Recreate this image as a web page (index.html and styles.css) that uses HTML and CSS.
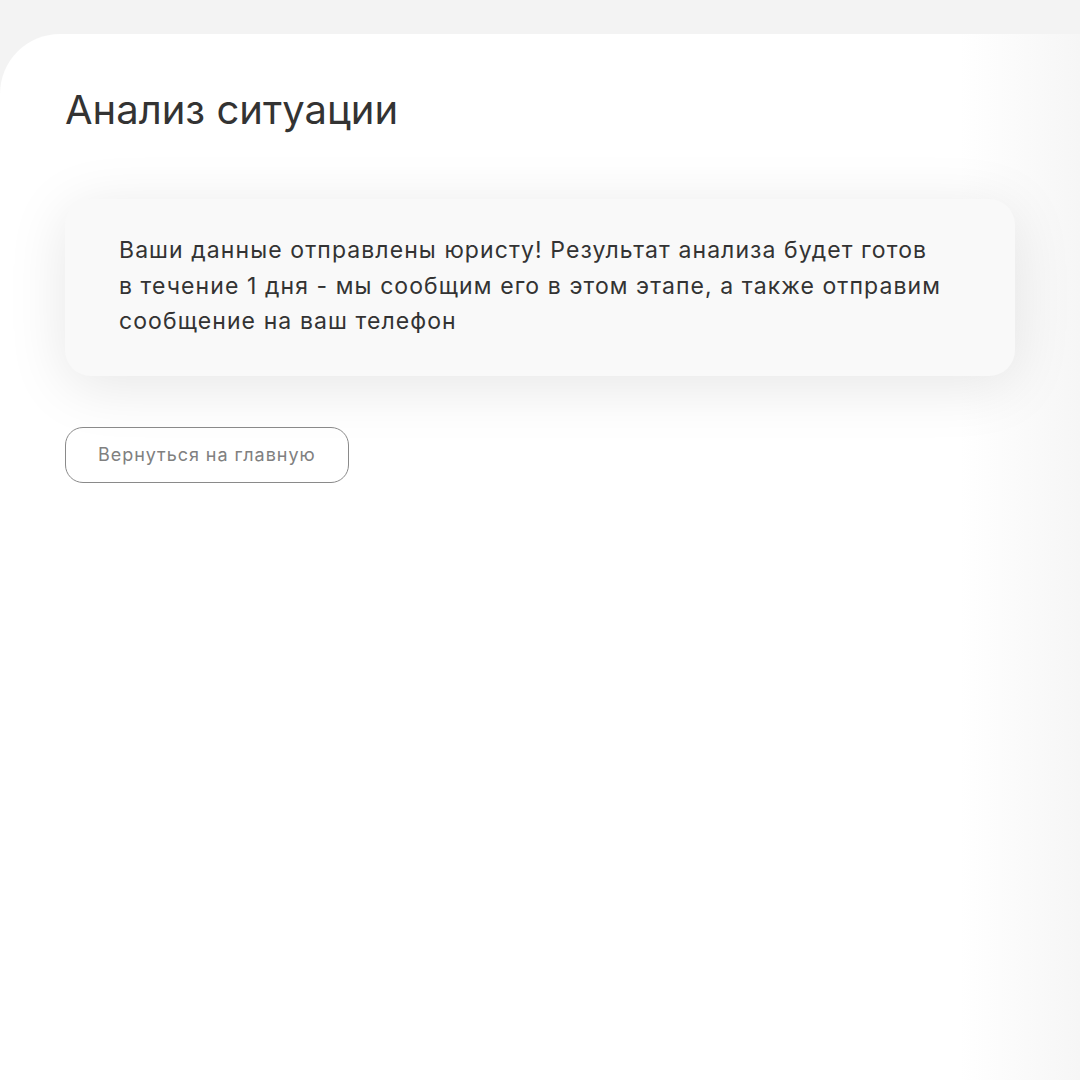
FILE: index.html
```html
<!DOCTYPE html>
<html lang="ru">
<head>
  <meta charset="UTF-8">
  <title>Анализ ситуации</title>
  <link rel="stylesheet" href="styles.css">
</head>
<body>

  <main class="panel">
    <h1 class="panel-title">Анализ ситуации</h1>

    <div class="notice">
      <p class="notice-text">Ваши данные отправлены юристу! Результат анализа будет готов в течение 1 дня - мы сообщим его в этом этапе, а также отправим сообщение на ваш телефон</p>
    </div>

    <button class="back-btn">Вернуться на главную</button>
  </main>

</body>
</html>
```

FILE: styles.css
```css
* {
  box-sizing: border-box;
  margin: 0;
  padding: 0;
}

body {
  height: 100vh;
  overflow: hidden;
  font-family: Inter, 'Noto Sans', sans-serif;
  background: #f3f3f3;
  color: #333;
  display: flex;
  flex-direction: column;
  padding-top: 34px;
}

.panel {
  flex: 1;
  background: linear-gradient(90deg, #fff 0, #fff 960px, #f6f6f6 100%);
  border-top-left-radius: 60px;
  padding: 52px 65px 0;
  display: flex;
  flex-direction: column;
  align-items: flex-start;
}

.panel-title {
  font-size: 40px;
  font-weight: 400;
  line-height: 48px;
  color: #333;
}

.notice {
  width: 950px;
  margin-top: 65px;
  background: #f9f9f9;
  border-radius: 26px;
  padding: 34px 71px 36px 54px;
  box-shadow: 0 10px 60px rgba(0, 0, 0, 0.1);
}

.notice-text {
  font-size: 23px;
  line-height: 35.5px;
  letter-spacing: 1.08px;
  color: #333;
}

.back-btn {
  margin-top: 51px;
  height: 56px;
  padding: 0 32px;
  background: transparent;
  border: 1px solid #8a8a8a;
  border-radius: 18px;
  font-family: inherit;
  font-size: 18px;
  letter-spacing: 0.95px;
  color: #808080;
  cursor: pointer;
}
```
